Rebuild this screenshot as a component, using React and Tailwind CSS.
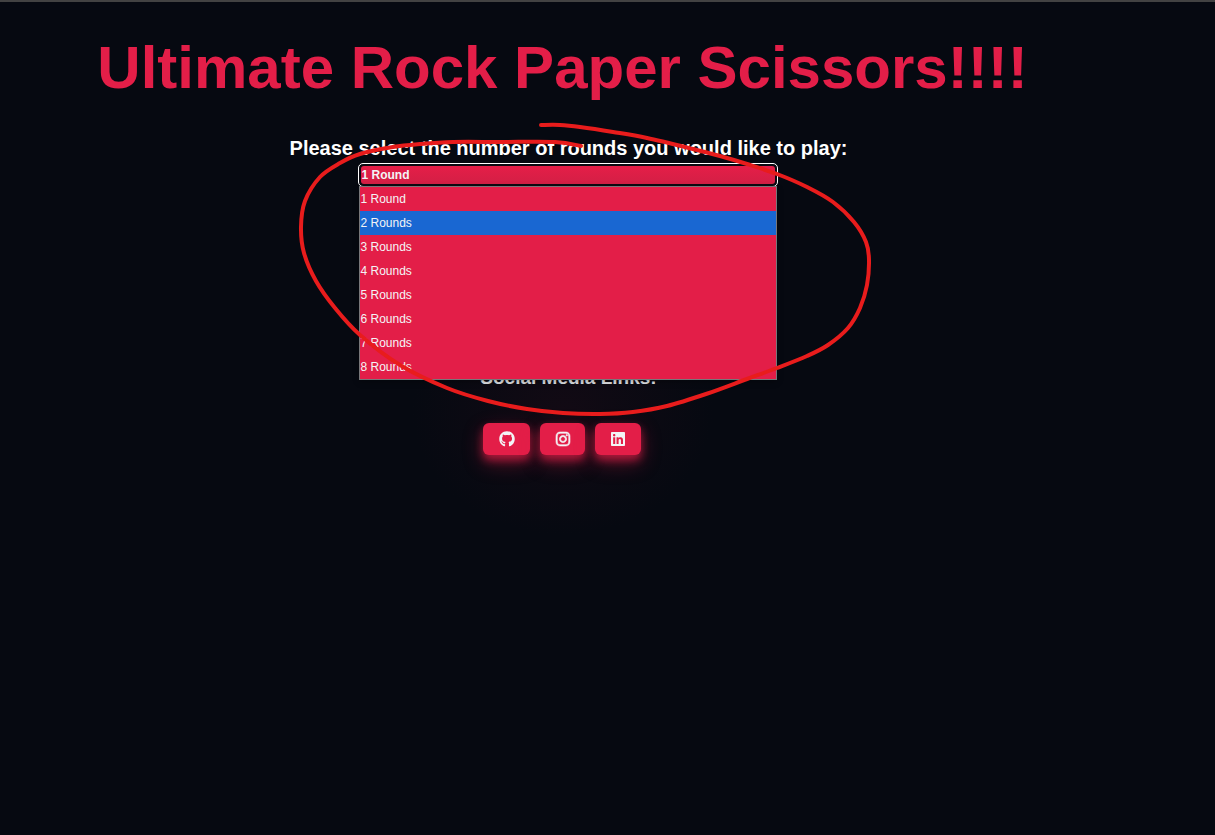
import { useState } from "react";
import { FaGithub, FaInstagram, FaLinkedin } from "react-icons/fa";

const ROUNDS = [1, 2, 3, 4, 5, 6, 7, 8].map((n) => (n === 1 ? "1 Round" : n + " Rounds"));

const LINKS = [
  { label: "GitHub", href: "#github", Icon: FaGithub, width: "w-[47px]", icon: "size-4" },
  {
    label: "Instagram",
    href: "#instagram",
    Icon: FaInstagram,
    width: "w-[45px]",
    icon: "size-4 overflow-visible stroke-current stroke-[20px]",
  },
  { label: "LinkedIn", href: "#linkedin", Icon: FaLinkedin, width: "w-[46px]", icon: "size-4" },
];

const MARKER_POINTS = [
  [541, 125], [560, 125], [580, 127], [613, 132], [647, 138], [693, 149], [720, 156], [747, 164],
  [777, 174], [807, 187], [833, 202], [854, 222], [866, 242], [869, 260], [867, 285], [860, 308],
  [848, 328], [828, 345], [807, 356], [777, 368], [747, 379], [706, 394], [667, 406], [633, 412],
  [600, 414], [563, 413], [527, 409], [488, 401], [447, 388], [400, 365], [360, 335], [335, 308],
  [316, 281], [304, 253], [301, 227], [305, 201], [320, 177], [340, 163], [360, 154], [393, 147],
  [420, 144], [453, 142], [500, 142], [555, 142], [581, 146],
];

function smoothPath(points) {
  let d = "M" + points[0].join(" ");
  for (let i = 0; i < points.length - 1; i++) {
    const p0 = points[Math.max(i - 1, 0)];
    const p1 = points[i];
    const p2 = points[i + 1];
    const p3 = points[Math.min(i + 2, points.length - 1)];
    const a = [p1[0] + (p2[0] - p0[0]) / 6, p1[1] + (p2[1] - p0[1]) / 6];
    const b = [p2[0] - (p3[0] - p1[0]) / 6, p2[1] - (p3[1] - p1[1]) / 6];
    d += "C" + [...a, ...b, ...p2].join(" ");
  }
  return d;
}

function Marker() {
  return (
    <svg
      aria-hidden="true"
      viewBox="290 115 590 310"
      className="pointer-events-none absolute -top-[48px] -left-[68px] z-20 h-[310px] w-[590px] max-w-none"
      fill="none"
      stroke="#e81c1c"
      strokeWidth="4"
      strokeLinecap="round"
      strokeLinejoin="round"
    >
      <path d={smoothPath(MARKER_POINTS)} />
    </svg>
  );
}

function RoundPicker() {
  const [round, setRound] = useState(ROUNDS[0]);
  const [active, setActive] = useState(ROUNDS[1]);

  return (
    <div className="relative w-[420px]">
      <div className="rounded-[5px] border border-white bg-[#0b0a12] p-[2px]">
        <select
          id="rounds"
          value={round}
          onChange={(e) => setRound(e.target.value)}
          className="block h-[18px] w-full appearance-none rounded-[3px] bg-linear-to-b from-[#e51e48] to-[#d31f45] text-xs leading-4 font-bold text-gray-100 outline-none"
        >
          {ROUNDS.map((r) => (
            <option key={r}>{r}</option>
          ))}
        </select>
      </div>
      <ul
        role="listbox"
        aria-label="Rounds"
        className="absolute inset-x-px top-[23px] z-10 border border-[#77777a] bg-[#e31e48] text-xs leading-6 text-gray-100 shadow-[0_2px_6px_rgba(0,0,0,0.3)]"
      >
        {ROUNDS.map((r) => (
          <li
            key={r}
            role="option"
            aria-selected={r === active}
            onMouseEnter={() => setActive(r)}
            onClick={() => setRound(r)}
            className={r === active ? "bg-[#1967d2]" : ""}
          >
            {r}
          </li>
        ))}
      </ul>
      <Marker />
    </div>
  );
}

export default function App() {
  return (
    <div className="min-h-screen border-t-2 border-[#424242] bg-[#060911] font-['Liberation_Sans',Arial,sans-serif]">
      <main className="flex flex-col items-center pt-9 pr-[90px]">
        <h1 className="text-center text-6xl leading-none font-bold text-[#e31e48]">
          Ultimate Rock Paper Scissors!!!!
        </h1>
        <div className="mt-[38px] flex flex-col items-center pl-3">
          <label htmlFor="rounds" className="mb-[3px] text-xl leading-6 font-bold text-white">
            Please select the number of rounds you would like to play:
          </label>
          <RoundPicker />
        </div>
        <section className="mt-[99px] flex flex-col items-center bg-[radial-gradient(closest-side,#120a14,#060911)] px-14 pt-20 pb-20">
          <h2 className="pl-3 text-[19px] leading-6 font-bold text-gray-200">Social Media Links:</h2>
          <nav className="mt-[33px] flex gap-2.5">
            {LINKS.map(({ label, href, Icon, width, icon }) => (
              <a
                key={label}
                href={href}
                aria-label={label}
                className={
                  "flex h-8 items-center justify-center rounded-md bg-[#e31e48] text-gray-100 shadow-[0_5px_8px_rgba(227,30,72,0.65),0_8px_20px_rgba(227,30,72,0.35)] " +
                  width
                }
              >
                <Icon className={icon} />
              </a>
            ))}
          </nav>
        </section>
      </main>
    </div>
  );
}
